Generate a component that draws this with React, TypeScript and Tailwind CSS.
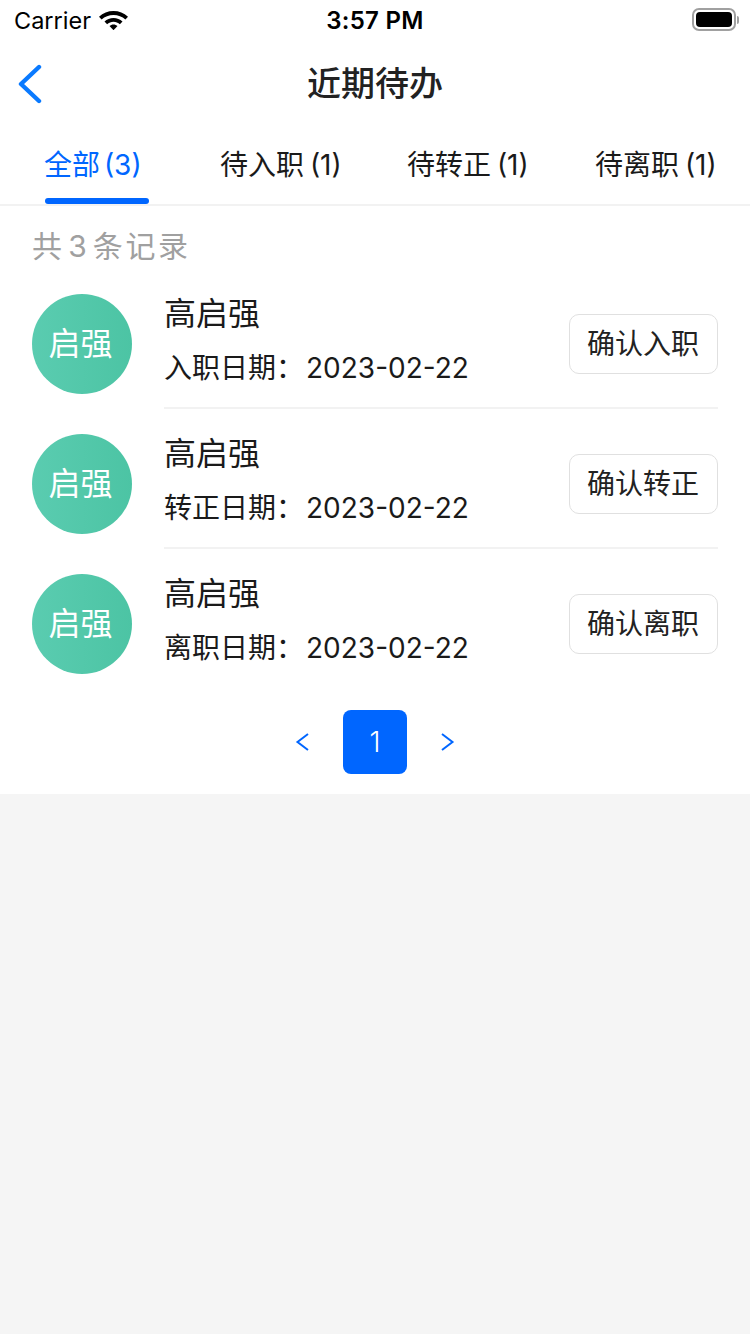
import React from "react";

const FONT = "font-['Inter','Noto_Sans_CJK_SC',sans-serif]";

const tabs = [
  { label: "全部 (3)", cls: "w-[104px] text-[#0066ff] [word-spacing:-4px]", active: true },
  { label: "待入职 (1)", cls: "w-[120px] ml-[72px] text-[#1a1a1a] [word-spacing:-2px]", active: false },
  { label: "待转正 (1)", cls: "w-[120px] ml-[67px] text-[#1a1a1a] [word-spacing:-2px]", active: false },
  { label: "待离职 (1)", cls: "w-[120px] ml-[68px] text-[#1a1a1a] [word-spacing:-2px]", active: false },
];

const records = [
  { dateLabel: "入职日期", action: "确认入职" },
  { dateLabel: "转正日期", action: "确认转正" },
  { dateLabel: "离职日期", action: "确认离职" },
];

const App: React.FC = () => {
  return (
    <div className={`${FONT} w-[750px] h-[1334px] bg-[#f5f5f5] overflow-hidden`}>
      <div className="bg-white h-[794px]">
        {/* status bar */}
        <div className="h-10 flex items-center justify-between pl-[14px] pr-[11px] relative">
          <div className="flex items-center gap-[7px] mt-[2px]">
            <span className="font-['Inter',sans-serif] text-[23.5px] leading-none text-black">Carrier</span>
            <svg width="31" height="22" viewBox="0 0 31 22" className="mt-[-5px]">
              <path d="M15.5 3C10 3 5 5 1 8.8l2.6 2.8C6.8 8.6 11 7 15.5 7s8.7 1.6 11.9 4.6L30 8.8C26 5 21 3 15.5 3z" fill="#000" />
              <path d="M15.5 10c-3.4 0-6.6 1.2-9 3.6l2.6 2.7c1.7-1.6 4-2.5 6.4-2.5s4.7.9 6.4 2.5l2.6-2.7c-2.4-2.4-5.6-3.6-9-3.6z" fill="#000" />
              <path d="M15.5 16.5c-1.5 0-2.9.5-4 1.6l4 4.1 4-4.1c-1.1-1.1-2.5-1.6-4-1.6z" fill="#000" />
            </svg>
          </div>
          <span className="absolute left-0 right-0 top-[9px] text-center font-['Inter',sans-serif] font-semibold tracking-[0.3px] text-[24px] leading-[24px] text-black">3:57 PM</span>
          <div className="flex items-center gap-[1px] mt-[-1px]">
            <div className="w-[44px] h-[23px] rounded-[7px] border-2 border-[#a0a0a0] p-[2px]">
              <div className="w-full h-full rounded-[4px] bg-black" />
            </div>
            <div className="w-[2px] h-[8px] rounded-r-[2px] bg-[#a0a0a0]" />
          </div>
        </div>

        {/* nav bar */}
        <div className="h-[88px] flex items-center justify-center relative">
          <svg width="26" height="40" viewBox="0 0 26 40" className="absolute left-[17px] top-[24px]">
            <path d="M22 3 L4 20 L22 37" fill="none" stroke="#0a7aff" strokeWidth="4.4" strokeLinecap="round" strokeLinejoin="round" />
          </svg>
          <span className="text-[34px] font-medium leading-none text-[#222222]">近期待办</span>
        </div>

        {/* tabs */}
        <div className="h-[78px] flex pl-[45px] border-b-2 border-[#f2f2f2]">
          {tabs.map((t) => (
            <div key={t.label} className={`${t.cls} flex flex-col justify-between shrink-0`}>
              <span className="text-[28px] leading-[40px] mt-[17px] ml-[-1px] whitespace-nowrap">{t.label}</span>
              {t.active && <div className="h-[6px] rounded-[3px] bg-[#0066ff]" />}
            </div>
          ))}
        </div>

        {/* count */}
        <div className="pl-[32px] h-[68px] pt-[19px] text-[30px] leading-[42px] text-[#a0a0a0] tracking-[2.6px] [word-spacing:-7.5px]">共 3 条记录</div>

        {/* list */}
        <div className="pl-[32px] pr-[32px]">
          {records.map((r, i) => (
            <div key={r.action} className="flex items-start h-[140px]">
              <div className="w-[100px] h-[100px] mt-[20px] pr-[3px] rounded-full bg-gradient-to-r from-[#5accb0] to-[#4cc4a4] flex items-center justify-center text-white text-[32px] leading-none shrink-0">
                启强
              </div>
              <div className={`ml-[32px] flex-1 h-[135px] flex justify-between items-start ${i < 2 ? "border-b-2 border-[#f2f2f2]" : ""}`}>
                <div className="pt-[19px]">
                  <div className="text-[32px] leading-[42px] text-[#1a1a1a]">高启强</div>
                  <div className="mt-[13px] text-[28px] leading-[40px] text-[#1a1a1a] whitespace-nowrap">
                    {r.dateLabel}：<span className="ml-[2px]">2023-02-22</span>
                  </div>
                </div>
                <div className="mt-[40px] w-[149px] h-[60px] pr-[1px] rounded-[10px] border border-[#e0e0e0] flex items-center justify-center text-[28px] leading-none text-[#222222]">
                  {r.action}
                </div>
              </div>
            </div>
          ))}
        </div>

        {/* pagination */}
        <div className="flex items-center justify-center mt-[16px]">
          <svg width="16" height="20" viewBox="0 0 16 20">
            <path d="M13 2 L2.5 10 L13 18" fill="none" stroke="#0066ff" strokeWidth="2" />
          </svg>
          <div className="mx-[32px] w-16 h-16 rounded-[8px] bg-[#0066ff] flex items-center justify-center text-white text-[28px] font-light leading-none">1</div>
          <svg width="16" height="20" viewBox="0 0 16 20">
            <path d="M3 2 L13.5 10 L3 18" fill="none" stroke="#0066ff" strokeWidth="2" />
          </svg>
        </div>
      </div>
    </div>
  );
};

export default App;
